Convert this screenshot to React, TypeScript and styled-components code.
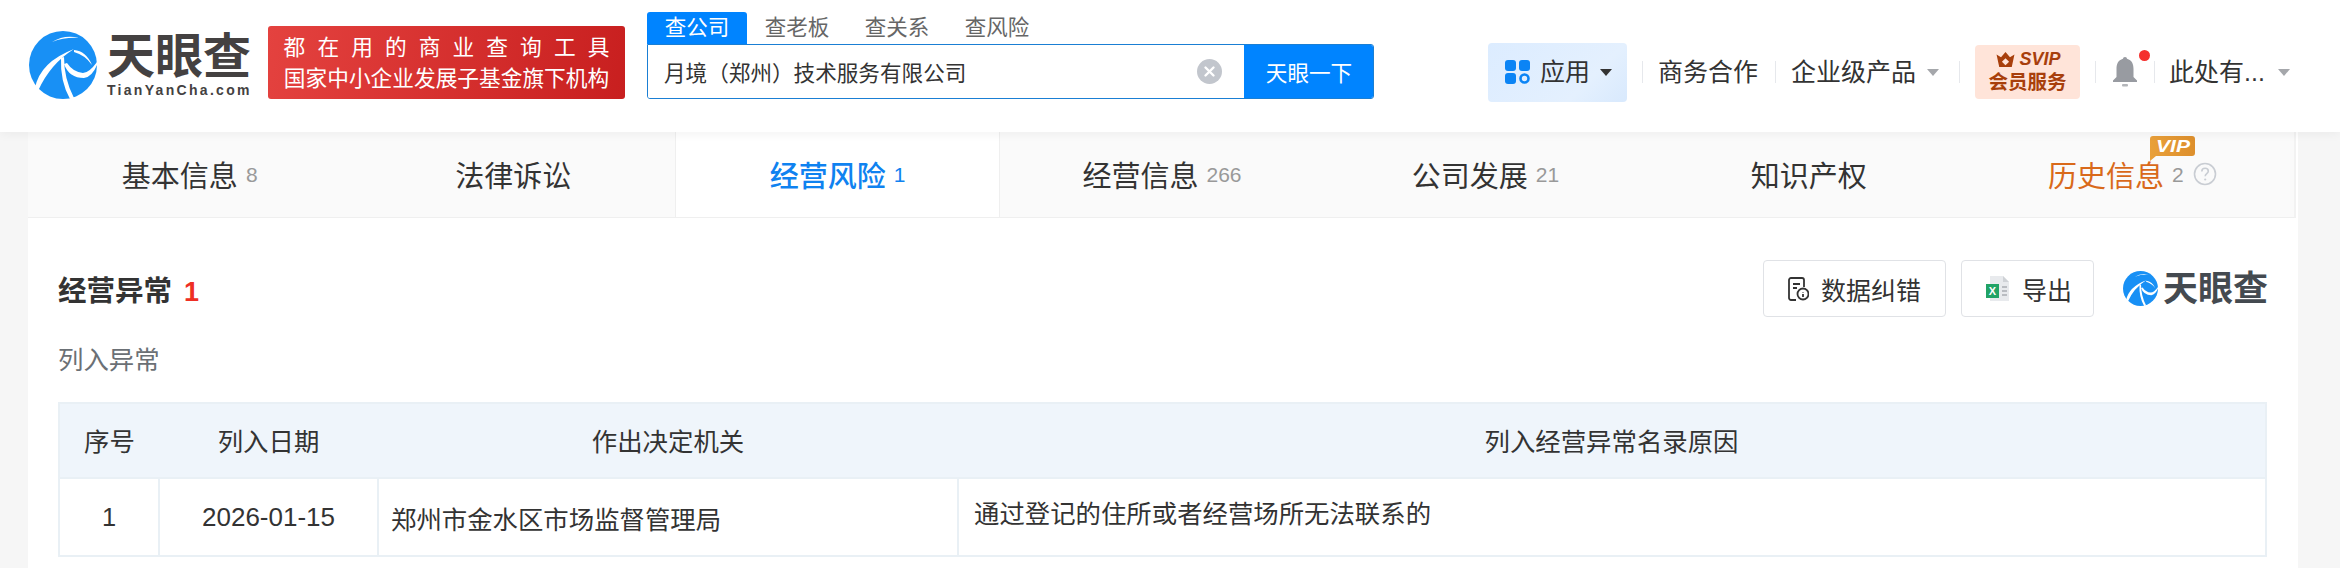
import React from "react";
import styled, { createGlobalStyle } from "styled-components";

const Global = createGlobalStyle`
  html, body { margin: 0; padding: 0; background: #f6f6f6; overflow: hidden; }
  body { font-family: "Liberation Sans", "Noto Sans CJK SC", sans-serif; color: #333; }
  * { box-sizing: border-box; }
`;

const Page = styled.div`width: 2340px; height: 568px; overflow: hidden; background: #f6f6f6;`;

const Header = styled.header`
  height: 132px; background: #fff; display: flex; align-items: flex-start; position: relative; z-index: 1;
  box-shadow: 0 2px 10px rgba(0,0,0,.05);
`;
const LogoBlock = styled.div`display: flex; align-items: center; gap: 10px; margin: 31px 0 0 29px; width: 223px; height: 68px;`;
const LogoWords = styled.div`display: flex; flex-direction: column; width: 146px;`;
const LogoCn = styled.div`font-size: 48px; line-height: 50px; height: 50px; font-weight: 700; color: #444141; white-space: nowrap;`;
const LogoEn = styled.div`font-size: 14px; line-height: 16px; font-weight: 700; color: #444141; letter-spacing: 2.3px; white-space: nowrap;`;
const Slogan = styled.div`
  margin: 26px 0 0 16px; width: 357px; height: 73px; border-radius: 3px; color: #fff;
  background: linear-gradient(100deg, #e4423f, #c81f1f); font-size: 21.7px; line-height: 31px;
  display: flex; flex-direction: column; align-items: center; justify-content: center;
`;
const SloganTop = styled.div`letter-spacing: 12.1px; margin-right: -12.1px; white-space: nowrap;`;
const SearchBlock = styled.div`margin: 12px 0 0 22px; width: 727px;`;
const SearchTabs = styled.div`display: flex; height: 32px;`;
const SearchTab = styled.div<{ $active?: boolean }>`
  width: 100px; height: 32px; font-size: 21.5px; line-height: 32px; text-align: center; border-radius: 3px 3px 0 0;
  color: ${p => (p.$active ? "#fff" : "#666")}; background: ${p => (p.$active ? "#0084ff" : "transparent")};
`;
const SearchBox = styled.div`height: 55px; display: flex; border: 1px solid #1a7fd4; border-radius: 0 3px 3px 3px; overflow: hidden;`;
const SearchInput = styled.div`flex: 1; display: flex; align-items: center; justify-content: space-between; padding: 0 22px 0 16px; font-size: 21.6px; color: #333; background: #fff;`;
const SearchButton = styled.div`width: 130px; margin: -1px -1px -1px 0; background: #0084ff; color: #fff; font-size: 21.6px; display: flex; align-items: center; justify-content: center;`;
const Clear = styled.svg`width: 25px; height: 25px; flex: none;`;

const Nav = styled.nav`display: flex; align-items: center; height: 60px; margin: 42px 0 0 114px; font-size: 25px; color: #333;`;
const AppsButton = styled.div`
  width: 139px; height: 59px; border-radius: 4px; background: linear-gradient(135deg, #dcecff, #e4f0fe 70%, #d8e9fd);
  display: flex; align-items: center; padding-left: 17px; gap: 10px;
`;
const Divider = styled.span<{ $l: number; $r: number }>`width: 1px; height: 22px; background: #e6e8ec; flex: none; margin: 0 ${p => p.$r}px 0 ${p => p.$l}px;`;
const Caret = styled.span<{ $color: string; $l?: number }>`
  width: 0; height: 0; flex: none; border-left: 6px solid transparent; border-right: 6px solid transparent;
  border-top: 7px solid ${p => p.$color}; margin-left: ${p => p.$l ?? 0}px;
`;
const NavText = styled.span`white-space: nowrap; line-height: 1;`;
const VipBox = styled.div`
  width: 105px; height: 54px; background: #ffe4d9; border-radius: 4px; color: #a83f0c; font-weight: 700;
  display: flex; flex-direction: column; align-items: center; justify-content: center; flex: none;
`;
const VipTop = styled.div`display: flex; align-items: center; gap: 4px; font-size: 18px; line-height: 21px; font-style: italic; font-family: "Liberation Sans", sans-serif;`;
const VipBottom = styled.div`font-size: 19.5px; line-height: 25px; white-space: nowrap;`;
const BellWrap = styled.div`position: relative; width: 26px; height: 30px; flex: none;`;
const RedDot = styled.span`position: absolute; right: -12px; top: -7px; width: 11px; height: 11px; border-radius: 50%; background: #f5302e;`;

const Main = styled.main`width: 2270px; margin-left: 28px; background: #fff; height: 436px;`;
const TabBar = styled.div`display: flex; width: 2268px; height: 86px; background: #fafafa; border-bottom: 1px solid #efefef; border-right: 2px solid #f2f2f2;`;
const Tab = styled.div<{ $active?: boolean; $vip?: boolean }>`
  flex: 1; display: flex; align-items: center; justify-content: center; position: relative; white-space: nowrap; padding-bottom: 1px;
  font-size: 29px; color: ${p => (p.$active ? "#0f82f0" : p.$vip ? "#d9691a" : "#333")};
  font-weight: ${p => (p.$active ? 500 : 400)};
  background: ${p => (p.$active ? "#fff" : "transparent")};
  ${p => (p.$active ? "border-left: 1px solid #efefef; border-right: 1px solid #efefef;" : "")}
`;
const TabCount = styled.span<{ $active?: boolean }>`font-size: 21px; font-weight: 400; margin: 2px 0 0 8px; color: ${p => (p.$active ? "#0f82f0" : "#999")};`;
const Help = styled.svg`width: 24px; height: 24px; margin-left: 9px; flex: none;`;
const VipTag = styled.svg`position: absolute; left: 179px; top: 4px; width: 45px; height: 25px;`;

const Section = styled.section`padding: 42px 30px 0 30px;`;
const TitleRow = styled.div`display: flex; align-items: center; justify-content: space-between; height: 57px;`;
const Title = styled.h2`margin: 0; font-size: 28.5px; font-weight: 700; color: #333; display: flex; align-items: baseline; gap: 12px;`;
const TitleCount = styled.span`color: #ee2f24; font-size: 27px;`;
const Actions = styled.div`display: flex; align-items: center;`;
const ActionButton = styled.div<{ $w: number; $m?: number }>`
  width: ${p => p.$w}px; height: 57px; margin-left: ${p => p.$m ?? 0}px; border: 1px solid #e0e2e6; border-radius: 4px; background: #fff;
  display: flex; align-items: center; padding-left: 24px; gap: 12px; font-size: 25px; color: #333; white-space: nowrap;
`;
const SmallLogo = styled.div`display: flex; align-items: center; gap: 5px; margin-left: 29px; width: 145px;`;
const SmallLogoText = styled.span`font-size: 35px; font-weight: 700; color: #444a50; line-height: 1; white-space: nowrap;`;
const Sub = styled.div`font-size: 25.4px; line-height: 30px; color: #6b7075; margin-top: 28px;`;
const Table = styled.table`
  width: 2209px; margin-top: 27px; border-collapse: collapse; table-layout: fixed; font-size: 25.4px; color: #333; border: 2px solid #e9f0f5;
`;
const HeadCell = styled.th`height: 75px; font-weight: 400; background: #eff5fb; text-align: center; padding: 0 0 2px; border-bottom: 2px solid #e9f0f5;`;
const Cell = styled.td<{ $align?: string; $pad?: string }>`
  height: 78px; border-right: 2px solid #e9f0f5; text-align: ${p => p.$align ?? "center"}; padding: ${p => p.$pad ?? "0"};
`;
const DateCell = styled(Cell)`font-size: 26px;`;

const Mark = ({ size }: { size: number }) => (
  <svg width={size} height={size} viewBox="0 0 68 68" style={{ flex: "none" }}>
    <circle cx="34" cy="34" r="34" fill="#1890f5" />
    <path d="M23 11Q36 3 50 7Q36 6 23 11Z" fill="#fff" />
    <path d="M6 57Q11 31 45 18Q21 33 9 60Z" fill="#fff" />
    <path d="M32 27Q31 50 41 68L45 67Q35 48 35 26Z" fill="#fff" />
    <path d="M35 33Q40 47 55 47Q63 46 68 34L68 31Q60 42 54 42Q44 41 38 32Z" fill="#fff" />
    <path d="M45 19Q57 20 63 34Q56 24 45 21Z" fill="#fff" />
  </svg>
);

export default function App() {
  return (
    <Page>
      <Global />
      <Header>
        <LogoBlock>
          <Mark size={68} />
          <LogoWords>
            <LogoCn>天眼查</LogoCn>
            <LogoEn>TianYanCha.com</LogoEn>
          </LogoWords>
        </LogoBlock>
        <Slogan>
          <SloganTop>都在用的商业查询工具</SloganTop>
          <div>国家中小企业发展子基金旗下机构</div>
        </Slogan>
        <SearchBlock>
          <SearchTabs>
            <SearchTab $active>查公司</SearchTab>
            <SearchTab>查老板</SearchTab>
            <SearchTab>查关系</SearchTab>
            <SearchTab>查风险</SearchTab>
          </SearchTabs>
          <SearchBox>
            <SearchInput>
              月境（郑州）技术服务有限公司
              <Clear viewBox="0 0 25 25">
                <circle cx="12.5" cy="12.5" r="12.5" fill="#c2c6cd" />
                <path d="M8.5 8.5l8 8M16.5 8.5l-8 8" stroke="#fff" strokeWidth="2.4" strokeLinecap="round" />
              </Clear>
            </SearchInput>
            <SearchButton>天眼一下</SearchButton>
          </SearchBox>
        </SearchBlock>
        <Nav>
          <AppsButton>
            <svg width="25" height="24" viewBox="0 0 25 24">
              <rect x="0" y="0" width="11" height="11" rx="3" fill="#0b84f5" />
              <rect x="14" y="0" width="11" height="11" rx="3" fill="#0b84f5" />
              <rect x="0" y="13" width="11" height="11" rx="3" fill="#0b84f5" />
              <circle cx="19.5" cy="18.5" r="4" fill="none" stroke="#0b84f5" strokeWidth="2.6" />
            </svg>
            <NavText>应用</NavText>
            <Caret $color="#333" />
          </AppsButton>
          <Divider $l={15} $r={15} />
          <NavText>商务合作</NavText>
          <Divider $l={17} $r={15} />
          <NavText>企业级产品</NavText>
          <Caret $color="#a5a7ab" $l={11} />
          <Divider $l={20} $r={15} />
          <VipBox>
            <VipTop>
              <svg width="21" height="17" viewBox="0 0 22 19">
                <path d="M1 4l5 3 5-6 5 6 5-3-3 14H4Z" fill="#a83f0c" />
                <path d="M11 8l4 4-4 4-4-4Z" fill="#ffe4d9" />
              </svg>
              SVIP
            </VipTop>
            <VipBottom>会员服务</VipBottom>
          </VipBox>
          <Divider $l={15} $r={16} />
          <BellWrap>
            <svg width="26" height="30" viewBox="0 0 26 30">
              <path d="M13 0c1.4 0 2 .9 2 1.8C20 3.2 21.5 7 21.5 12v8L25 23.500V25H1v-1.500L4.500 20v-8C4.500 7 6 3.200 11 1.800 11 .9 11.600 0 13 0Z" fill="#989ba1" />
              <rect x="10" y="27" width="6" height="2.500" rx="1" fill="#b4b6ba" />
            </svg>
            <RedDot />
          </BellWrap>
          <Divider $l={16} $r={14} />
          <NavText>此处有...</NavText>
          <Caret $color="#a5a7ab" $l={13} />
        </Nav>
      </Header>
      <Main>
        <TabBar>
          <Tab>基本信息<TabCount>8</TabCount></Tab>
          <Tab>法律诉讼</Tab>
          <Tab $active>经营风险<TabCount $active>1</TabCount></Tab>
          <Tab>经营信息<TabCount>266</TabCount></Tab>
          <Tab>公司发展<TabCount>21</TabCount></Tab>
          <Tab>知识产权</Tab>
          <Tab $vip>
            历史信息<TabCount>2</TabCount>
            <Help viewBox="0 0 24 24">
              <circle cx="12" cy="12" r="10.500" fill="none" stroke="#c9cdd3" strokeWidth="1.600" />
              <path d="M8.800 9.500c0-2 1.500-3.200 3.300-3.200s3.200 1.200 3.200 2.900c0 2.400-3.100 2.500-3.100 5" fill="none" stroke="#c9cdd3" strokeWidth="1.600" />
              <circle cx="12.200" cy="17.500" r="1.100" fill="#c9cdd3" />
            </Help>
            <VipTag viewBox="0 0 45 25">
              <defs>
                <linearGradient id="vipFill" x1="0" y1="0" x2="1" y2="0">
                  <stop offset="0" stopColor="#e9a03a" />
                  <stop offset="1" stopColor="#dd8f2c" />
                </linearGradient>
              </defs>
              <path d="M3 0H42a3 3 0 0 1 3 3V17a3 3 0 0 1-3 3H6L0 25V3A3 3 0 0 1 3 0Z" fill="url(#vipFill)" />
              <text x="6" y="16" textLength="34" lengthAdjust="spacingAndGlyphs" fontSize="17" fontStyle="italic" fontWeight="700" fontFamily="Liberation Sans" fill="#fff">VIP</text>
            </VipTag>
          </Tab>
        </TabBar>
        <Section>
          <TitleRow>
            <Title>经营异常<TitleCount>1</TitleCount></Title>
            <Actions>
              <ActionButton $w={183}>
                <svg width="21" height="24" viewBox="0 0 21 24">
                  <path d="M8 23H3a2 2 0 0 1-2-2V3a2 2 0 0 1 2-2h11a2 2 0 0 1 2 2v7" fill="none" stroke="#333" strokeWidth="1.800" />
                  <path d="M5 7h7M5 11h4" stroke="#333" strokeWidth="1.800" />
                  <circle cx="15" cy="17" r="5.500" fill="none" stroke="#333" strokeWidth="1.800" />
                  <path d="M15 15v.5M15 17v3" stroke="#333" strokeWidth="1.800" />
                </svg>
                数据纠错
              </ActionButton>
              <ActionButton $w={133} $m={15}>
                <svg width="24" height="27" viewBox="0 0 24 27">
                  <path d="M4 1h13l6 6v19H4Z" fill="#e8eaed" />
                  <path d="M17 1l6 6h-6Z" fill="#cfd2d6" />
                  <path d="M16 12h5M16 16h5M16 20h5" stroke="#a9adb3" strokeWidth="1.500" />
                  <rect x="0" y="9" width="13" height="14" fill="#21a366" />
                  <text x="6.500" y="20" textAnchor="middle" fontSize="11" fontWeight="700" fontFamily="Liberation Sans" fill="#fff">X</text>
                </svg>
                导出
              </ActionButton>
              <SmallLogo>
                <Mark size={35} />
                <SmallLogoText>天眼查</SmallLogoText>
              </SmallLogo>
            </Actions>
          </TitleRow>
          <Sub>列入异常</Sub>
          <Table>
            <colgroup>
              <col style={{ width: 100 }} />
              <col style={{ width: 219 }} />
              <col style={{ width: 580 }} />
              <col />
            </colgroup>
            <thead>
              <tr>
                <HeadCell>序号</HeadCell>
                <HeadCell>列入日期</HeadCell>
                <HeadCell>作出决定机关</HeadCell>
                <HeadCell>列入经营异常名录原因</HeadCell>
              </tr>
            </thead>
            <tbody>
              <tr>
                <Cell>1</Cell>
                <DateCell>2026-01-15</DateCell>
                <Cell $align="left" $pad="2px 12px 0">郑州市金水区市场监督管理局</Cell>
                <Cell $align="left" $pad="0 15px 10px">通过登记的住所或者经营场所无法联系的</Cell>
              </tr>
            </tbody>
          </Table>
        </Section>
      </Main>
    </Page>
  );
}
